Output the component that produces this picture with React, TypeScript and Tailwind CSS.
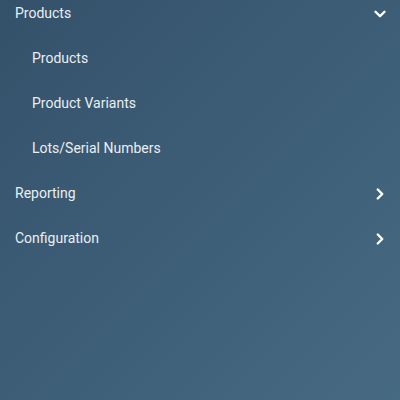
import { ChevronDown, ChevronRight } from "lucide-react";

const SUB_ITEMS = ["Products", "Product Variants", "Lots/Serial Numbers"];

function Row({ label, indent, icon }: { label: string; indent?: boolean; icon?: "down" | "right" }) {
  return (
    <div className={`flex h-[45px] items-center justify-between pr-[11px] ${indent ? "pl-[32px]" : "pl-[15px]"}`}>
      <span className="text-[14px] text-[#e9eff3]">{label}</span>
      {icon === "down" && <ChevronDown size={18} strokeWidth={3.2} className="text-white" />}
      {icon === "right" && <ChevronRight size={18} strokeWidth={3.2} className="text-white" />}
    </div>
  );
}

export default function App() {
  return (
    <div
      className="h-[400px] w-[400px] overflow-hidden bg-linear-to-br from-[#34516a] to-[#476a83]"
      style={{ fontFamily: "Roboto, 'Liberation Sans', sans-serif" }}
    >
      <div className="-mt-[9px] flex flex-col">
        <Row label="Products" icon="down" />
        {SUB_ITEMS.map((s) => (
          <Row key={s} label={s} indent />
        ))}
        <Row label="Reporting" icon="right" />
        <Row label="Configuration" icon="right" />
      </div>
    </div>
  );
}
